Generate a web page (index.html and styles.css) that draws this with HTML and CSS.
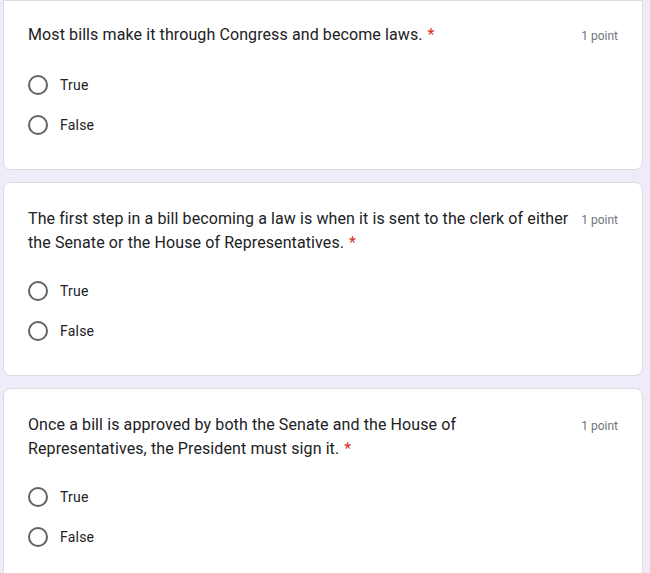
FILE: index.html
```html
<!DOCTYPE html>
<html lang="en">
<head>
<meta charset="utf-8">
<title>Quiz</title>
<link rel="stylesheet" href="styles.css">
</head>
<body>
<main class="form">
  <section class="card card-first">
    <div class="q-head">
      <div class="q-title">Most bills make it through Congress and become laws.<span class="req">*</span></div>
      <div class="q-points">1 point</div>
    </div>
    <div class="options">
      <label class="option"><span class="radio"></span><span class="opt-label">True</span></label>
      <label class="option"><span class="radio"></span><span class="opt-label">False</span></label>
    </div>
  </section>
  <section class="card">
    <div class="q-head">
      <div class="q-title">The first step in a bill becoming a law is when it is sent to the clerk of either the Senate or the House of Representatives.<span class="req">*</span></div>
      <div class="q-points">1 point</div>
    </div>
    <div class="options">
      <label class="option"><span class="radio"></span><span class="opt-label">True</span></label>
      <label class="option"><span class="radio"></span><span class="opt-label">False</span></label>
    </div>
  </section>
  <section class="card">
    <div class="q-head">
      <div class="q-title">Once a bill is approved by both the Senate and the House of Representatives, the President must sign it.<span class="req">*</span></div>
      <div class="q-points">1 point</div>
    </div>
    <div class="options">
      <label class="option"><span class="radio"></span><span class="opt-label">True</span></label>
      <label class="option"><span class="radio"></span><span class="opt-label">False</span></label>
    </div>
  </section>
</main>
</body>
</html>
```

FILE: styles.css
```css
html, body {
  margin: 0;
  padding: 0;
  background: #f0ebf8;
}
body {
  font-family: Roboto, "Liberation Sans", Arial, sans-serif;
  color: #202124;
}
.form {
  display: flex;
  flex-direction: column;
  gap: 12px;
  padding: 0 0 0 3px;
  width: 640px;
}
.card {
  background: #fff;
  border: 1px solid #dadce0;
  border-radius: 8px;
  padding: 24px;
}
.card-first {
  padding-top: 22px;
  border-top-left-radius: 0;
  border-top-right-radius: 0;
}
.card-first .q-head {
  margin-bottom: 17px;
}
.q-head {
  display: flex;
  align-items: flex-start;
  gap: 8px;
  margin-bottom: 16px;
}
.q-title {
  flex: 1;
  font-size: 16px;
  line-height: 24px;
  letter-spacing: 0.1px;
  color: #202124;
}
.req {
  color: #d93025;
  margin-left: 5px;
}
.q-points {
  font-size: 12px;
  line-height: 24px;
  color: #70757a;
  white-space: nowrap;
  padding-top: 1px;
}
.options {
  display: flex;
  flex-direction: column;
}
.option {
  display: flex;
  align-items: center;
  gap: 12px;
  height: 40px;
}
.radio {
  box-sizing: border-box;
  width: 20px;
  height: 20px;
  border: 2px solid #5f6368;
  border-radius: 50%;
}
.opt-label {
  font-size: 14px;
  letter-spacing: 0.2px;
  color: #202124;
}
```
